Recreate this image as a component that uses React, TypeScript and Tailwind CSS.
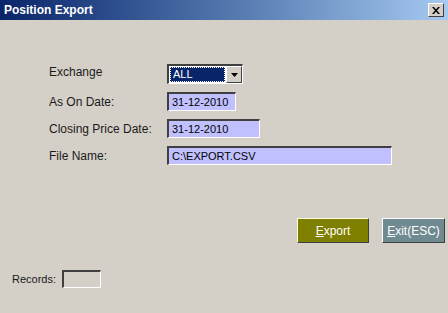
import React from "react";

const font = { fontFamily: '"Liberation Sans", Arial, sans-serif' };

function Field({ value, width }: { value: string; width: string }) {
  return (
    <div
      className={`${width} h-[19px] bg-[#c0c0ff] border-t-2 border-l-2 border-b border-r border-t-[#404040] border-l-[#404040] border-b-white border-r-white flex items-center pl-[3px] text-[11px] text-black`}
    >
      {value}
    </div>
  );
}

function Label({ children }: { children: React.ReactNode }) {
  return <div className="text-[12px] text-[#1a1a1a] flex items-center h-full">{children}</div>;
}

export default function App() {
  return (
    <div className="w-[448px] h-[313px] bg-[#d4d0c8] flex flex-col overflow-hidden" style={font}>
      {/* title bar */}
      <div className="h-[20px] bg-gradient-to-r from-[#0a246a] to-[#a6caf0] flex items-center justify-between pl-[4px] pr-[4px]">
        <span className="text-white font-bold text-[12px]">Position Export</span>
        <div className="w-[16px] h-[14px] bg-[#d4d0c8] border border-t-white border-l-white border-b-[#404040] border-r-[#404040] flex items-center justify-center">
          <svg width="8" height="7" viewBox="0 0 8 7">
            <path d="M0 0h2l2 2.5L6 0h2L5 3.5 8 7H6L4 4.5 2 7H0l3-3.5z" fill="#000" />
          </svg>
        </div>
      </div>

      {/* form */}
      <div className="mt-[44px] ml-[49px] grid grid-cols-[118px_auto] gap-y-[8px]">
        <div className="h-[20px] -mt-[2px]">
          <Label>Exchange</Label>
        </div>
        <div className="w-[76px] h-[20px] border-t-2 border-l-2 border-b border-r border-t-[#404040] border-l-[#404040] border-b-white border-r-white bg-white flex">
          <div className="flex-1 m-[1px] bg-[#0a246a] border border-dotted border-[#ffffff] flex items-center pl-[2px] text-white text-[11px]">
            ALL
          </div>
          <div className="w-[16px] bg-[#d4d0c8] border border-t-white border-l-white border-b-[#404040] border-r-[#404040] flex items-center justify-center">
            <svg width="7" height="4" viewBox="0 0 7 4">
              <path d="M0 0h7L3.5 4z" fill="#000" />
            </svg>
          </div>
        </div>

        <div className="h-[19px]">
          <Label>As On Date:</Label>
        </div>
        <Field value="31-12-2010" width="w-[69px]" />

        <div className="h-[19px]">
          <Label>Closing Price Date:</Label>
        </div>
        <Field value="31-12-2010" width="w-[93px]" />

        <div className="h-[19px]">
          <Label>File Name:</Label>
        </div>
        <Field value="C:\EXPORT.CSV" width="w-[225px]" />
      </div>

      {/* buttons */}
      <div className="mt-[53px] ml-[297px] flex gap-[13px]">
        <button className="w-[72px] h-[25px] bg-[#808000] border border-t-[#ffffe0] border-l-[#ffffe0] border-b-[#404040] border-r-[#404040] text-white text-[12px]">
          <span className="underline underline-offset-1">E</span>xport
        </button>
        <button className="w-[63px] h-[25px] bg-[#6f8a90] border border-t-white border-l-white border-b-[#404040] border-r-[#404040] text-white text-[12px]">
          <span className="underline underline-offset-1">E</span>xit(ESC)
        </button>
      </div>

      {/* records */}
      <div className="mt-[27px] ml-[12px] flex items-center gap-[6px]">
        <span className="text-[11px] text-[#1a1a1a]">Records:</span>
        <div className="w-[39px] h-[18px] bg-[#d4d0c8] border-t-2 border-l-2 border-b border-r border-t-[#404040] border-l-[#404040] border-b-white border-r-white" />
      </div>
    </div>
  );
}
